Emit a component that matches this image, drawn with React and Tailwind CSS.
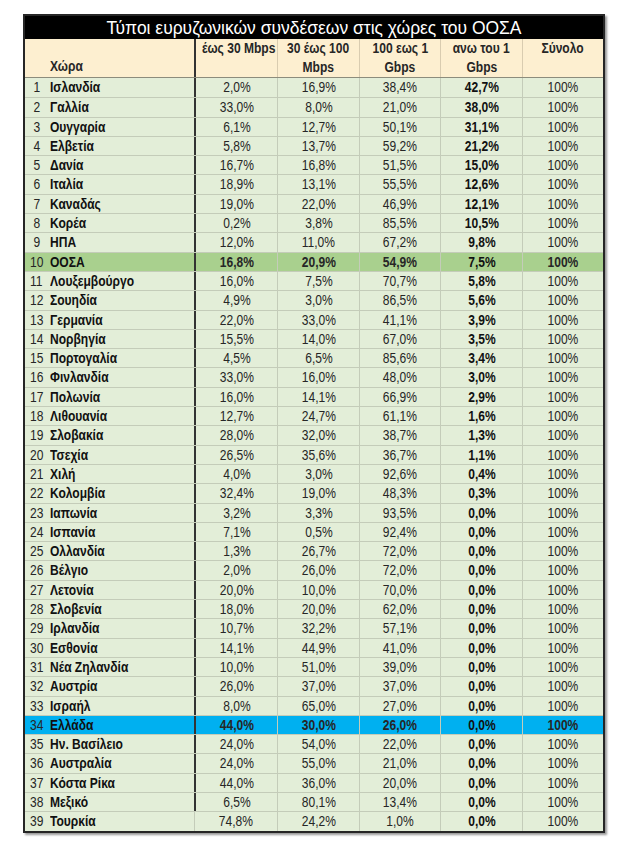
import React from "react";

const rows = [
  ["Ισλανδία", "2,0%", "16,9%", "38,4%", "42,7%"],
  ["Γαλλία", "33,0%", "8,0%", "21,0%", "38,0%"],
  ["Ουγγαρία", "6,1%", "12,7%", "50,1%", "31,1%"],
  ["Ελβετία", "5,8%", "13,7%", "59,2%", "21,2%"],
  ["Δανία", "16,7%", "16,8%", "51,5%", "15,0%"],
  ["Ιταλία", "18,9%", "13,1%", "55,5%", "12,6%"],
  ["Καναδάς", "19,0%", "22,0%", "46,9%", "12,1%"],
  ["Κορέα", "0,2%", "3,8%", "85,5%", "10,5%"],
  ["ΗΠΑ", "12,0%", "11,0%", "67,2%", "9,8%"],
  ["ΟΟΣΑ", "16,8%", "20,9%", "54,9%", "7,5%"],
  ["Λουξεμβούργο", "16,0%", "7,5%", "70,7%", "5,8%"],
  ["Σουηδία", "4,9%", "3,0%", "86,5%", "5,6%"],
  ["Γερμανία", "22,0%", "33,0%", "41,1%", "3,9%"],
  ["Νορβηγία", "15,5%", "14,0%", "67,0%", "3,5%"],
  ["Πορτογαλία", "4,5%", "6,5%", "85,6%", "3,4%"],
  ["Φινλανδία", "33,0%", "16,0%", "48,0%", "3,0%"],
  ["Πολωνία", "16,0%", "14,1%", "66,9%", "2,9%"],
  ["Λιθουανία", "12,7%", "24,7%", "61,1%", "1,6%"],
  ["Σλοβακία", "28,0%", "32,0%", "38,7%", "1,3%"],
  ["Τσεχία", "26,5%", "35,6%", "36,7%", "1,1%"],
  ["Χιλή", "4,0%", "3,0%", "92,6%", "0,4%"],
  ["Κολομβία", "32,4%", "19,0%", "48,3%", "0,3%"],
  ["Ιαπωνία", "3,2%", "3,3%", "93,5%", "0,0%"],
  ["Ισπανία", "7,1%", "0,5%", "92,4%", "0,0%"],
  ["Ολλανδία", "1,3%", "26,7%", "72,0%", "0,0%"],
  ["Βέλγιο", "2,0%", "26,0%", "72,0%", "0,0%"],
  ["Λετονία", "20,0%", "10,0%", "70,0%", "0,0%"],
  ["Σλοβενία", "18,0%", "20,0%", "62,0%", "0,0%"],
  ["Ιρλανδία", "10,7%", "32,2%", "57,1%", "0,0%"],
  ["Εσθονία", "14,1%", "44,9%", "41,0%", "0,0%"],
  ["Νέα Ζηλανδία", "10,0%", "51,0%", "39,0%", "0,0%"],
  ["Αυστρία", "26,0%", "37,0%", "37,0%", "0,0%"],
  ["Ισραήλ", "8,0%", "65,0%", "27,0%", "0,0%"],
  ["Ελλάδα", "44,0%", "30,0%", "26,0%", "0,0%"],
  ["Ην. Βασίλειο", "24,0%", "54,0%", "22,0%", "0,0%"],
  ["Αυστραλία", "24,0%", "55,0%", "21,0%", "0,0%"],
  ["Κόστα Ρίκα", "44,0%", "36,0%", "20,0%", "0,0%"],
  ["Μεξικό", "6,5%", "80,1%", "13,4%", "0,0%"],
  ["Τουρκία", "74,8%", "24,2%", "1,0%", "0,0%"],
];

const font = "font-['Liberation_Sans',Arial,sans-serif]";
const cols = "grid grid-cols-[23px_146px_83px_82px_81px_82px_81px]";

// Arial Narrow look: squeeze the glyphs sideways
const N = ({ children, left }) => (
  <span className={`inline-block whitespace-nowrap scale-x-[0.86] ${left ? "origin-left" : "origin-center"}`}>
    {children}
  </span>
);

export default function App() {
  return (
    <div className={`min-h-[853px] w-[624px] bg-white pl-[23px] pt-[14px] ${font}`}>
      <div className="w-[582px] border-2 border-[#262626] shadow-[2px_2px_2px_#9a9a9a]">
        <div className="flex h-[23px] items-center justify-center bg-black text-[18px] leading-none text-white">
          <span className="inline-block scale-x-[0.97] whitespace-nowrap">
            Τύποι ευρυζωνικών συνδέσεων στις χώρες του ΟΟΣΑ
          </span>
        </div>

        <div className={`${cols} h-[39px] border-b border-[#8c8c7c] bg-[#fdefd0] text-[14px] font-bold leading-[19px] text-[#262626]`}>
          <div className="col-span-2 flex items-end pb-[1px] pl-[25px]"><N left>Χώρα</N></div>
          <div className="border-l-2 border-[#333] text-center"><N>έως 30 Mbps</N></div>
          <div className="flex flex-col items-center border-l border-[#d9ccb0]"><N>30 έως 100</N><N>Mbps</N></div>
          <div className="flex flex-col items-center border-l border-[#d9ccb0]"><N>100 εως 1</N><N>Gbps</N></div>
          <div className="flex flex-col items-center border-l border-[#d9ccb0]"><N>ανω του 1</N><N>Gbps</N></div>
          <div className="border-l border-[#d9ccb0] text-center"><N>Σύνολο</N></div>
        </div>

        {rows.map((r, i) => {
          const oecd = i === 9;
          const greece = i === 33;
          const last = i === rows.length - 1;
          const bg = oecd ? "bg-[#a9d08e]" : greece ? "bg-[#00b0f0]" : "bg-[#e3eed8]";
          const strong = oecd || greece ? "font-bold" : "";
          return (
            <div
              key={r[0]}
              className={`${cols} h-[19.3px] ${bg} ${i > 0 ? "border-t border-[#c4ccb9]" : ""} text-[14px] leading-[18px] text-[#262626]`}
            >
              <div className="text-center"><N>{i + 1}</N></div>
              <div className="pl-[2px] font-bold text-[#111]"><N left>{r[0]}</N></div>
              <div className={`${last ? "border-l border-[#c4ccb9]" : "border-l-2 border-[#333]"} text-center ${strong}`}><N>{r[1]}</N></div>
              <div className={`border-l border-[#c4ccb9] text-center ${strong}`}><N>{r[2]}</N></div>
              <div className={`border-l border-[#c4ccb9] text-center ${strong}`}><N>{r[3]}</N></div>
              <div className="border-l border-[#c4ccb9] text-center font-bold text-[#111]"><N>{r[4]}</N></div>
              <div className={`border-l border-[#c4ccb9] text-center ${strong}`}><N>100%</N></div>
            </div>
          );
        })}
      </div>
    </div>
  );
}
